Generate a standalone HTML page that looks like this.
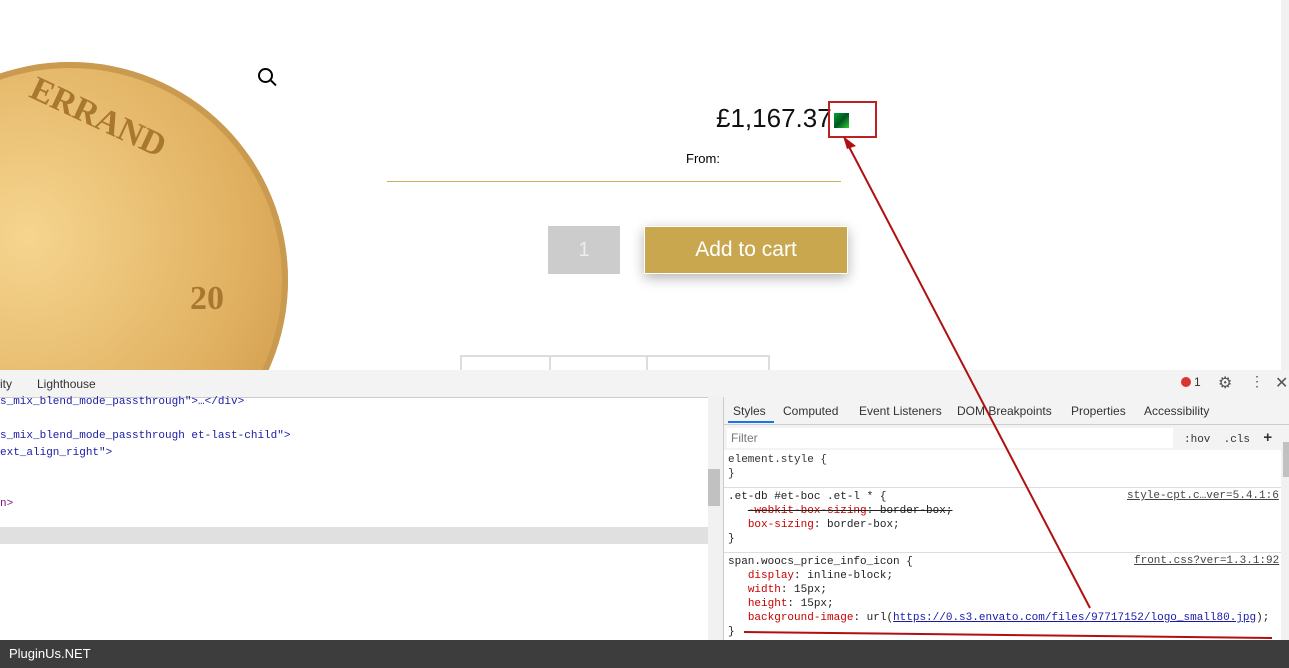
<!DOCTYPE html><html><head><style>
body{margin:0;width:1289px;height:668px;position:relative;overflow:hidden;background:#fff;font-family:"Liberation Sans",sans-serif}
.a{position:absolute}
.mono{font-family:"Liberation Mono",monospace;font-size:11px}
</style></head><body>
<div class="a" style="left:0;top:0;width:1289px;height:370px;overflow:hidden">
<div class="a" style="left:-148px;top:62px;width:436px;height:436px;border-radius:50%;background:radial-gradient(circle at 40% 40%,#f6d58f,#e0b060 60%,#c48e3c);box-shadow:inset 0 0 0 6px #c99a50"></div>
<div class="a" style="font:bold 34px 'Liberation Serif',serif;color:#a9772f;transform:rotate(25deg);transform-origin:0 0;left:40px;top:70px">ERRAND</div>
<div class="a" style="left:190px;top:280px;font:bold 34px 'Liberation Serif',serif;color:#a9772f">20</div>
<div class="a" style="left:460px;top:355px;width:306px;height:15px;border:2px solid #ddd;border-bottom:0"></div>
<div class="a" style="left:549px;top:355px;width:2px;height:15px;background:#ddd"></div>
<div class="a" style="left:646px;top:355px;width:2px;height:15px;background:#ddd"></div>
</div>
<div class="a" style="left:258px;top:68px;width:11px;height:11px;border:2px solid #000;border-radius:50%"></div>
<div class="a" style="left:270px;top:82px;width:7px;height:2px;background:#000;transform:rotate(45deg)"></div>
<div class="a" style="left:716px;top:103px;font-size:26px;color:#111">£1,167.37</div>
<div class="a" style="left:834px;top:113px;width:15px;height:15px;background:linear-gradient(135deg,#0a3 0,#052 50%,#3c3 100%)"></div>
<div class="a" style="left:828px;top:101px;width:45px;height:33px;border:2px solid #b22"></div>
<div class="a" style="left:686px;top:151px;font-size:13px">From:</div>
<div class="a" style="left:387px;top:181px;width:454px;height:1px;background:#c9b25a"></div>
<div class="a" style="left:548px;top:226px;width:72px;height:48px;background:#ccc;color:#eee;font-size:20px;text-align:center;line-height:48px">1</div>
<div class="a" style="left:644px;top:226px;width:204px;height:48px;background:#c9a74f;color:#fff;font-size:21px;text-align:center;line-height:46px;box-shadow:0 4px 12px rgba(0,0,0,.3);border:1px solid #fff;box-sizing:border-box">Add to cart</div>
<div class="a" style="left:1281px;top:0;width:8px;height:370px;background:#f1f1f1"></div>
<div class="a" style="left:0;top:370px;width:1289px;height:27px;background:#f3f3f3;border-bottom:1px solid #ccc;font-size:12px;color:#333"><span class="a" style="left:0;top:7px">ity</span><span class="a" style="left:37px;top:7px">Lighthouse</span>
<span class="a" style="left:1181px;top:7px;width:10px;height:10px;border-radius:50%;background:#d33"></span><span class="a" style="left:1194px;top:5px">1</span><span class="a" style="left:1218px;top:3px;font-size:16px;color:#555">⚙</span><span class="a" style="left:1250px;top:3px;font-size:14px;color:#555">⋮</span><span class="a" style="left:1275px;top:3px;font-size:16px;color:#555">✕</span></div>
<div class="a mono" style="left:0;top:394px;color:#1a1aa6;line-height:17px">s_mix_blend_mode_passthrough"&gt;…&lt;/div&gt;<br><br>s_mix_blend_mode_passthrough et-last-child"&gt;<br>ext_align_right"&gt;<br><br><br><span style="color:#881280">n&gt;</span></div>
<div class="a" style="left:0;top:527px;width:708px;height:17px;background:#e0e0e0"></div>
<div class="a" style="left:708px;top:397px;width:15px;height:243px;background:#f1f1f1"></div>
<div class="a" style="left:708px;top:469px;width:12px;height:37px;background:#c1c1c1"></div>
<div class="a" style="left:723px;top:397px;width:1px;height:243px;background:#ccc"></div>
<div class="a" style="left:724px;top:397px;width:565px;height:27px;background:#f3f3f3;border-bottom:1px solid #ccc;font-size:12px;color:#333">
<span class="a" style="left:9px;top:7px">Styles</span><span class="a" style="left:59px;top:7px">Computed</span><span class="a" style="left:135px;top:7px">Event Listeners</span><span class="a" style="left:233px;top:7px">DOM Breakpoints</span><span class="a" style="left:347px;top:7px">Properties</span><span class="a" style="left:420px;top:7px">Accessibility</span>
<span class="a" style="left:4px;top:24px;width:46px;height:2px;background:#1a73e8"></span></div>
<div class="a" style="left:724px;top:425px;width:565px;height:25px;background:#f3f3f3"></div>
<div class="a" style="left:727px;top:428px;width:446px;height:20px;background:#fff;font-size:12px;color:#777;line-height:20px;padding-left:4px;box-sizing:border-box">Filter</div>
<div class="a mono" style="left:1184px;top:430px;color:#333">:hov &nbsp;.cls &nbsp;<b style="font-size:15px">+</b></div>
<div class="a" style="left:1281px;top:440px;width:8px;height:200px;background:#f1f1f1"></div>
<div class="a" style="left:1283px;top:442px;width:6px;height:35px;background:#c1c1c1"></div>
<div class="a mono" style="left:728px;top:453px;line-height:14px;color:#333">element.style {<br>}</div>
<div class="a" style="left:724px;top:487px;width:557px;height:1px;background:#ddd"></div>
<div class="a mono" style="left:728px;top:490px;line-height:14px;color:#222">.et-db #et-boc .et-l * {<br>&nbsp;&nbsp;&nbsp;<s><span style="color:#c80000">-webkit-box-sizing</span>: border-box;</s><br>&nbsp;&nbsp;&nbsp;<span style="color:#c80000">box-sizing</span>: border-box;<br>}</div>
<div class="a mono" style="left:1127px;top:490px;color:#444;text-decoration:underline">style-cpt.c…ver=5.4.1:6</div>
<div class="a" style="left:724px;top:552px;width:557px;height:1px;background:#ddd"></div>
<div class="a mono" style="left:728px;top:555px;line-height:14px;color:#222">span.woocs_price_info_icon {<br>&nbsp;&nbsp;&nbsp;<span style="color:#c80000">display</span>: inline-block;<br>&nbsp;&nbsp;&nbsp;<span style="color:#c80000">width</span>: 15px;<br>&nbsp;&nbsp;&nbsp;<span style="color:#c80000">height</span>: 15px;<br>&nbsp;&nbsp;&nbsp;<span style="color:#c80000">background-image</span>: url(<span style="color:#1a1aa6;text-decoration:underline">https://0.s3.envato.com/files/97717152/logo_small80.jpg</span>);<br>}</div>
<div class="a mono" style="left:1134px;top:555px;color:#444;text-decoration:underline">front.css?ver=1.3.1:92</div>
<svg class="a" style="left:0;top:0" width="1289" height="668"><line x1="846" y1="141" x2="1090" y2="608" stroke="#b01010" stroke-width="2"/><polygon points="843,136 856,146 847,149" fill="#b01010"/><line x1="744" y1="632" x2="1272" y2="638" stroke="#b01010" stroke-width="2"/></svg>
<div class="a" style="left:0;top:640px;width:1289px;height:28px;background:#3d3d3d;color:#fff;font-size:13px;line-height:28px;padding-left:9px">PluginUs.NET</div>
</body></html>
